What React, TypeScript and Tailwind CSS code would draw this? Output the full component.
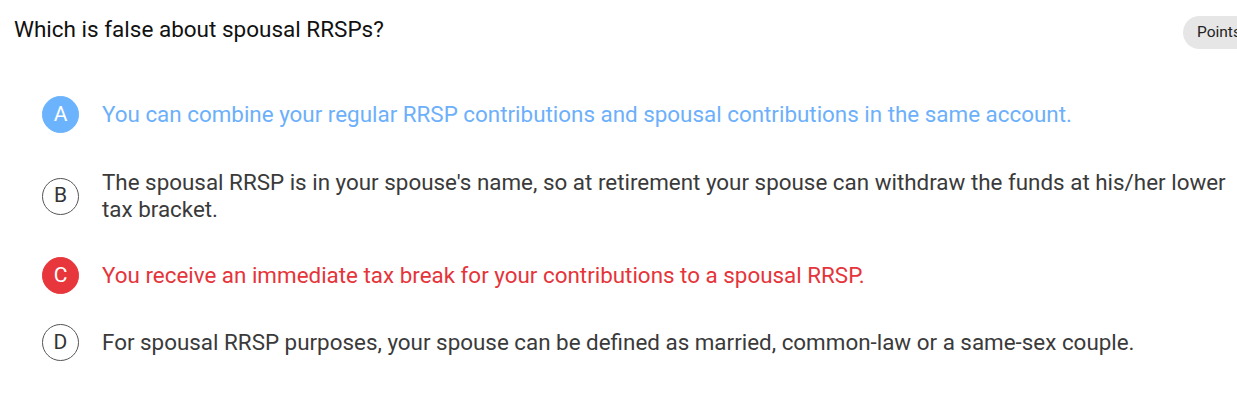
import React from "react";

const options = [
  { letter: "A", text: "You can combine your regular RRSP contributions and spousal contributions in the same account.", state: "selected", mt: "mt-0" },
  { letter: "B", text: "The spousal RRSP is in your spouse's name, so at retirement your spouse can withdraw the funds at his/her lower tax bracket.", state: "none", mt: "mt-[36px]" },
  { letter: "C", text: "You receive an immediate tax break for your contributions to a spousal RRSP.", state: "wrong", mt: "mt-[34px]" },
  { letter: "D", text: "For spousal RRSP purposes, your spouse can be defined as married, common-law or a same-sex couple.", state: "none", mt: "mt-[30px]" },
];

export default function App() {
  return (
    <div className="w-[1237px] h-[416px] overflow-hidden bg-white" style={{ fontFamily: "Roboto, 'Noto Sans', sans-serif" }}>
      <div className="flex items-start justify-between pl-[14px] pt-[14px]">
        <h1 className="text-[22.5px] leading-[30px] text-[#111111] font-normal">Which is false about spousal RRSPs?</h1>
        <div className="mt-[2px] h-[33px] w-[54px] shrink-0 overflow-hidden whitespace-nowrap rounded-l-full bg-[#e6e6e6] pl-[14px] text-[15.5px] leading-[33px] text-[#222222]">
          Points
        </div>
      </div>
      <div className="mt-[47px] flex flex-col pl-[42px]">
        {options.map((o) => {
          const circle =
            o.state === "selected"
              ? "bg-[#6cb3fd] text-white border-[#6cb3fd]"
              : o.state === "wrong"
              ? "bg-[#e7373c] text-white border-[#e7373c]"
              : "bg-white text-[#333333] border-[#555555]";
          const txt =
            o.state === "selected" ? "text-[#6cb0fb]" : o.state === "wrong" ? "text-[#e5343a]" : "text-[#3a3a3a]";
          return (
            <div key={o.letter} className={`flex items-center gap-[23px] ${o.mt}`}>
              <div className={`flex h-[37px] w-[37px] shrink-0 items-center justify-center rounded-full border text-[21px] ${circle}`}>
                {o.letter}
              </div>
              <div className={`flex-1 text-[22.4px] leading-[27px] ${txt}`}>{o.text}</div>
            </div>
          );
        })}
      </div>
    </div>
  );
}
